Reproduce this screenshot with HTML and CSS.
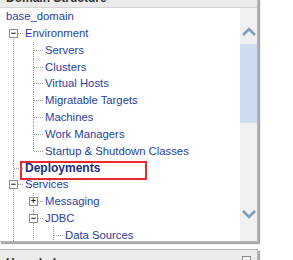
FILE: index.html
```html
<html>

<head>
    <title>Domain Structure</title>
    <link rel="stylesheet" href="styles.css">
</head>

<body>
    <div id="content">
        <div class="panel structure">
            <div class="panel-head">
                <h2>Domain Structure</h2>
            </div>
            <div class="panel-body">
                <div class="tree">
                    <div class="root">base_domain</div>
                    <ul class="top">
                        <li class="open">
                            <span class="toggle">&minus;</span>
                            <span class="label">Environment</span>
                            <ul>
                                <li><span class="label">Servers</span></li>
                                <li><span class="label">Clusters</span></li>
                                <li><span class="label">Virtual Hosts</span></li>
                                <li><span class="label">Migratable Targets</span></li>
                                <li><span class="label">Machines</span></li>
                                <li><span class="label">Work Managers</span></li>
                                <li><span class="label">Startup &amp; Shutdown Classes</span></li>
                            </ul>
                        </li>
                        <li class="current">
                            <span class="label">Deployments</span>
                            <span class="mark"></span>
                        </li>
                        <li class="open">
                            <span class="toggle">&minus;</span>
                            <span class="label">Services</span>
                            <ul>
                                <li>
                                    <span class="toggle">+</span>
                                    <span class="label">Messaging</span>
                                </li>
                                <li class="open">
                                    <span class="toggle">&minus;</span>
                                    <span class="label">JDBC</span>
                                    <ul>
                                        <li><span class="label">Data Sources</span></li>
                                        <li><span class="label">Multi Data Sources</span></li>
                                        <li><span class="label">Data Source Factories</span></li>
                                    </ul>
                                </li>
                                <li><span class="label">Persistent Stores</span></li>
                                <li><span class="label">Foreign JNDI Providers</span></li>
                            </ul>
                        </li>
                        <li><span class="label">Security Realms</span></li>
                        <li><span class="label">Interoperability</span></li>
                        <li><span class="label">Diagnostics</span></li>
                    </ul>
                </div>
                <div class="scrollbar">
                    <svg class="arrow up" width="14" height="9" viewBox="0 0 14 9">
                        <path d="M1 8 L7 2 L13 8" fill="none" stroke="#7d9db9" stroke-width="2.6"/>
                    </svg>
                    <div class="thumb"></div>
                    <div class="track"></div>
                    <svg class="arrow down" width="14" height="9" viewBox="0 0 14 9">
                        <path d="M1 1 L7 7 L13 1" fill="none" stroke="#7d9db9" stroke-width="2.6"/>
                    </svg>
                </div>
            </div>
        </div>
        <div class="panel help">
            <div class="panel-head">
                <h2>How do I...</h2>
                <span class="minimize"></span>
            </div>
        </div>
    </div>
</body>

</html>
```
FILE: styles.css
```css
body {
    margin: 0;
    overflow: hidden;
    background: #fff;
    font-family: "Liberation Sans", Arial, sans-serif;
}

#content {
    display: flex;
    flex-direction: column;
    gap: 7px;
    margin-top: -13px;
}

.panel {
    width: 257px;
    margin-left: -1px;
    border: 1px solid #b8b8b8;
    box-shadow: 2px 2px 1px #a9a9a9;
    background: #fff;
}

.panel-head {
    height: 19px;
    background: #ebebeb;
    border-bottom: 1px solid #d4d4d4;
    display: flex;
    align-items: center;
    justify-content: space-between;
    padding: 0 6px;
}

.panel-head h2 {
    margin: 0;
    font-size: 12px;
    font-weight: bold;
    color: #333;
}

.help .panel-head {
    align-items: flex-start;
    padding-top: 6px;
    height: 40px;
}

.minimize {
    width: 7px;
    height: 7px;
    border: 1px solid #8a8a8a;
    background: #f4f4f4;
}

.panel-body {
    display: flex;
    height: 233px;
}

.tree {
    flex: 1;
    overflow: hidden;
    padding: 0 0 0 6px;
    font-size: 11.3px;
    color: #1f3f9e;
}

.root,
.tree .label {
    display: block;
    height: 16.85px;
    line-height: 16.85px;
    white-space: nowrap;
}

.tree ul {
    list-style: none;
    margin: 0;
    padding: 0 0 0 8px;
}

.tree ul.top {
    padding-left: 7px;
}

.tree li {
    position: relative;
    padding-left: 12px;
}

/* dotted tree lines */
.tree li::before {
    content: "";
    position: absolute;
    left: 0;
    top: 0;
    bottom: 0;
    border-left: 1px dotted #9a9a9a;
}

.tree li:last-child::before {
    bottom: auto;
    height: 8px;
}

.tree ul.top > li:first-child::before {
    top: 8px;
}

.tree li::after {
    content: "";
    position: absolute;
    left: 1px;
    top: 8px;
    width: 9px;
    border-top: 1px dotted #9a9a9a;
}

.toggle {
    position: absolute;
    left: -4px;
    top: 4px;
    width: 7px;
    height: 7px;
    border: 1px solid #8c8c8c;
    background: #fff;
    z-index: 1;
    font-size: 9px;
    line-height: 6px;
    text-align: center;
    color: #222;
    font-weight: bold;
}

.current .label {
    font-weight: bold;
    font-size: 12px;
    color: #1b2f7f;
}

/* red highlight drawn over the selected node */
.mark {
    position: absolute;
    left: 7px;
    top: 1px;
    width: 123px;
    height: 15px;
    border: 2px solid #ea2a2f;
}

.scrollbar {
    width: 17px;
    background: #f0f0f0;
    display: flex;
    flex-direction: column;
    align-items: center;
}

.arrow.up {
    margin-top: 19px;
    margin-bottom: 8px;
}

.thumb {
    align-self: stretch;
    height: 79px;
    background: #cddcef;
}

.track {
    flex: 1;
}

.arrow.down {
    margin-bottom: 22px;
}
```
